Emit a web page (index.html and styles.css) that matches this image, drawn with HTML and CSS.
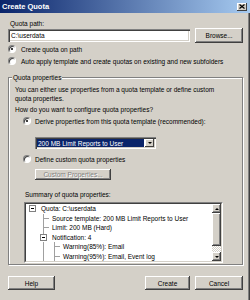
FILE: index.html
```html
<!DOCTYPE html>
<html lang="en">
<head>
    <meta charset="UTF-8">
    <meta name="viewport" content="width=device-width, initial-scale=1.0">
    <title>Create Quota</title>
    <link rel="stylesheet" href="styles.css">
</head>
<body>
    <div class="window">
        <div class="titlebar">
            <span>Create Quota</span>
            <span class="close">
                <svg width="6" height="5" viewBox="0 0 6 5"><path d="M0.5 0.5 L5.5 4.5 M5.5 0.5 L0.5 4.5" stroke="#000" stroke-width="1.2"/></svg>
            </span>
        </div>

        <div class="content">
            <div class="label">Quota path:</div>
            <div class="path-row">
                <div class="textbox">C:\userdata</div>
                <div class="button browse">Browse...</div>
            </div>

            <div class="option"><span class="radio checked"></span>Create quota on path</div>
            <div class="option"><span class="radio"></span>Auto apply template and create quotas on existing and new subfolders</div>

            <fieldset class="group">
                <legend>Quota properties</legend>
                <p class="note">You can either use properties from a quota template or define custom<br>quota properties.</p>
                <p class="question">How do you want to configure quota properties?</p>

                <div class="option sub"><span class="radio checked"></span>Derive properties from this quota template (recommended):</div>
                <div class="combo">
                    <span class="combo-value">200 MB Limit Reports to User</span>
                    <span class="combo-arrow"><span class="arrow-down"></span></span>
                </div>

                <div class="option sub"><span class="radio"></span>Define custom quota properties</div>
                <div class="button custom">Custom Properties...</div>

                <div class="summary-label">Summary of quota properties:</div>
                <div class="tree">
                    <div class="tree-inner">
                        <div class="tree-items">
                            <div class="tree-row">
                                <span class="cell box"><span class="expander"></span></span>
                                <span class="node">Quota: C:\userdata</span>
                            </div>
                            <div class="tree-row">
                                <span class="cell"></span>
                                <span class="cell tee"></span>
                                <span class="node">Source template: 200 MB Limit Reports to User</span>
                            </div>
                            <div class="tree-row">
                                <span class="cell"></span>
                                <span class="cell tee"></span>
                                <span class="node">Limit: 200 MB (Hard)</span>
                            </div>
                            <div class="tree-row">
                                <span class="cell"></span>
                                <span class="cell box up"><span class="expander"></span></span>
                                <span class="node">Notification: 4</span>
                            </div>
                            <div class="tree-row">
                                <span class="cell"></span>
                                <span class="cell line"></span>
                                <span class="cell tee"></span>
                                <span class="node">Warning(85%): Email</span>
                            </div>
                            <div class="tree-row">
                                <span class="cell"></span>
                                <span class="cell line"></span>
                                <span class="cell tee"></span>
                                <span class="node">Warning(95%): Email, Event log</span>
                            </div>
                        </div>
                        <div class="scrollbar">
                            <span class="button scroll-btn"><span class="arrow-up"></span></span>
                            <span class="button thumb"></span>
                            <span class="track"></span>
                            <span class="button scroll-btn"><span class="arrow-down"></span></span>
                        </div>
                    </div>
                </div>
            </fieldset>
        </div>

        <div class="footer">
            <div class="button help">Help</div>
            <div class="button create">Create</div>
            <div class="button cancel">Cancel</div>
        </div>
    </div>
</body>
</html>
```

FILE: styles.css
```css
body {
    margin: 0;
    font-family: "Liberation Sans", Arial, sans-serif;
    font-size: 6.5px;
    color: #000;
}

.window {
    width: 250px;
    height: 300px;
    background: #d4d0c8;
    box-shadow: inset -1px 0 #404040, inset -2px 0 #808080;
    overflow: hidden;
}

.titlebar {
    height: 13px;
    display: flex;
    align-items: center;
    justify-content: space-between;
    padding: 0 3px 0 2px;
    background: linear-gradient(to right, #0a246a, #a6caf0);
    color: #fff;
    font-weight: bold;
    font-size: 7.5px;
}

.close {
    width: 10px;
    height: 8px;
    display: flex;
    align-items: center;
    justify-content: center;
    background: #d4d0c8;
    box-shadow: inset -1px -1px #404040, inset 1px 1px #fff;
}

.close svg {
    display: block;
}

.content {
    padding: 0 7px 0 8px;
}

.label {
    margin-top: 6px;
    line-height: 9px;
    padding-left: 2px;
}

.path-row {
    height: 15px;
    display: flex;
    align-items: center;
    gap: 5px;
}

.textbox {
    width: 183px;
    height: 13px;
    box-sizing: border-box;
    display: flex;
    align-items: center;
    padding-left: 3px;
    background: #fff;
    box-shadow: inset 1px 1px #808080, inset 2px 2px #404040, inset -1px -1px #fff, inset -2px -2px #d4d0c8;
}

.button {
    box-sizing: border-box;
    display: flex;
    align-items: center;
    justify-content: center;
    background: #d4d0c8;
    box-shadow: inset -1px -1px #404040, inset 1px 1px #fff, inset -2px -2px #808080;
}

.browse {
    width: 48px;
    height: 15px;
}

.option {
    height: 12px;
    display: flex;
    align-items: center;
    gap: 5px;
    white-space: nowrap;
}

.content > .option:first-of-type {
    margin-top: 3px;
}

.radio {
    width: 8px;
    height: 8px;
    box-sizing: border-box;
    flex: none;
    display: flex;
    align-items: center;
    justify-content: center;
    border-radius: 50%;
    background: #fff;
    border: 1px solid;
    border-color: #808080 #fff #fff #808080;
    box-shadow: inset 1px 1px #404040;
}

.radio.checked::after {
    content: "";
    width: 2px;
    height: 2px;
    border-radius: 50%;
    background: #000;
}

.group {
    margin: 6px 0 0;
    min-width: 0;
    padding: 3px 19px 1px 6px;
    border: 1px solid #808080;
    box-shadow: 1px 1px 0 #fff, inset 1px 1px 0 #fff;
}

.group legend {
    margin-left: -3px;
    padding: 0 1px;
    line-height: 9px;
    background: #d4d0c8;
}

.group p {
    margin: 0;
    line-height: 9px;
    white-space: nowrap;
}

.group .question {
    margin-top: 2px;
}

.option.sub {
    height: 10px;
    margin-left: 8px;
    gap: 4px;
}

.question + .option.sub {
    margin-top: 2px;
}

.combo {
    width: 121px;
    height: 12px;
    box-sizing: border-box;
    margin: 11px 0 0 20px;
    padding: 2px;
    display: flex;
    background: #fff;
    box-shadow: inset 1px 1px #808080, inset 2px 2px #404040, inset -1px -1px #fff, inset -2px -2px #d4d0c8;
}

.combo-value {
    flex: 1;
    display: flex;
    align-items: center;
    padding-left: 1px;
    margin-right: 1px;
    background: #0a246a;
    color: #fff;
    white-space: nowrap;
}

.combo-arrow {
    width: 9px;
    display: flex;
    align-items: center;
    justify-content: center;
    background: #d4d0c8;
    box-shadow: inset -1px -1px #404040, inset 1px 1px #fff;
}

.arrow-down {
    border-left: 2px solid transparent;
    border-right: 2px solid transparent;
    border-top: 2px solid #000;
}

.arrow-up {
    border-left: 2px solid transparent;
    border-right: 2px solid transparent;
    border-bottom: 2px solid #000;
}

.combo + .option.sub {
    margin-top: 5px;
}

.custom {
    width: 76px;
    height: 11px;
    margin: 5px 0 0 20px;
    color: #808080;
    text-shadow: 1px 1px 0 #fff;
}

.summary-label {
    margin: 10px 0 0 10px;
    line-height: 9px;
}

.tree {
    margin: 3px 0 0 9px;
    border: 1px solid;
    border-color: #808080 #fff #fff #808080;
}

.tree-inner {
    height: 57px;
    display: flex;
    border: 1px solid;
    border-color: #404040 #d4d0c8 #d4d0c8 #404040;
    background: #fff;
}

.tree-items {
    flex: 1;
    overflow: hidden;
    padding-left: 1px;
}

.tree-row {
    height: 9.5px;
    display: flex;
    align-items: center;
    white-space: nowrap;
}

.cell {
    width: 11px;
    height: 100%;
    flex: none;
    display: flex;
    align-items: center;
    justify-content: center;
}

.cell.line {
    background: linear-gradient(#a0a0a0, #a0a0a0) 5px 0 / 1px 100% no-repeat;
}

.cell.tee {
    background:
        linear-gradient(#a0a0a0, #a0a0a0) 5px 0 / 1px 100% no-repeat,
        linear-gradient(#a0a0a0, #a0a0a0) 5px 50% / 6px 1px no-repeat;
}

.cell.box.up {
    background: linear-gradient(#a0a0a0, #a0a0a0) 5px 0 / 1px 50% no-repeat;
}

.expander {
    width: 7px;
    height: 7px;
    box-sizing: border-box;
    border: 1px solid #808080;
    background: #fff linear-gradient(#000, #000) center / 3px 1px no-repeat;
}

.node {
    margin-left: 3px;
}

.scrollbar {
    width: 9px;
    display: flex;
    flex-direction: column;
}

.scroll-btn {
    height: 9px;
}

.thumb {
    height: 33px;
}

.track {
    flex: 1;
    background: repeating-conic-gradient(#fff 0 25%, #d4d0c8 0 50%) 0 0 / 2px 2px;
}

.footer {
    display: flex;
    gap: 5px;
    margin-top: 11px;
    padding: 0 7px 0 8px;
}

.footer .button {
    height: 14px;
}

.help {
    width: 47px;
    margin-right: auto;
}

.create {
    width: 45px;
}

.cancel {
    width: 48px;
}
```
